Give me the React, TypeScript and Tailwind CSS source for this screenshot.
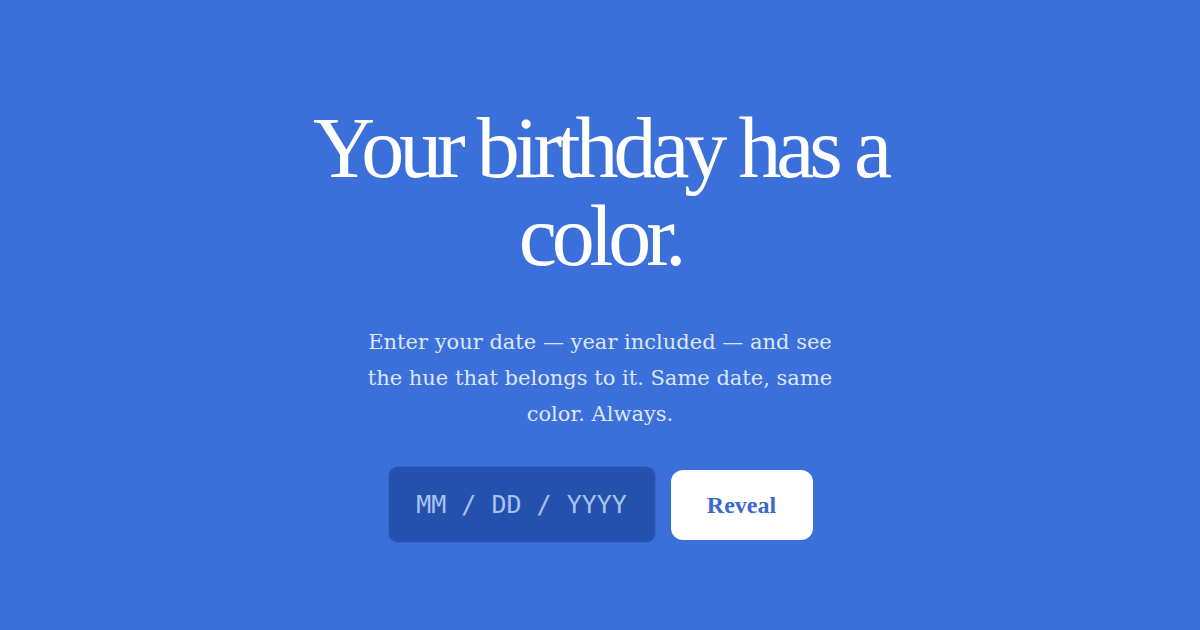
export default function App() {
  return (
    <div className="w-full h-[630px] bg-[#3b6fd9] flex flex-col items-center overflow-hidden">
      <h1 className="mt-[104px] w-[640px] text-center text-[86px] leading-[88px] tracking-[-0.06em] text-white font-['Liberation_Serif','DejaVu_Serif',serif]">
        Your birthday has a color.
      </h1>
      <p className="mt-[44px] w-[490px] text-center text-[21px] leading-[36px] text-[#dce6fa] font-['DejaVu_Serif','Liberation_Serif',serif]">
        Enter your date — year included — and see the hue that belongs to it. Same date, same color. Always.
      </p>
      <div className="mt-[34px] flex items-center gap-[15px]">
        <div className="w-[268px] h-[77px] rounded-[10px] bg-[#2451ad] border border-[#3563c4] flex items-center justify-center text-[25px] text-[#a9c3f2] font-['DejaVu_Sans_Mono','Liberation_Mono',monospace]">
          MM / DD / YYYY
        </div>
        <button className="w-[142px] h-[70px] rounded-[12px] bg-white text-[#3b68cc] text-[24px] font-bold font-['Liberation_Serif',serif]">
          Reveal
        </button>
      </div>
    </div>
  );
}
